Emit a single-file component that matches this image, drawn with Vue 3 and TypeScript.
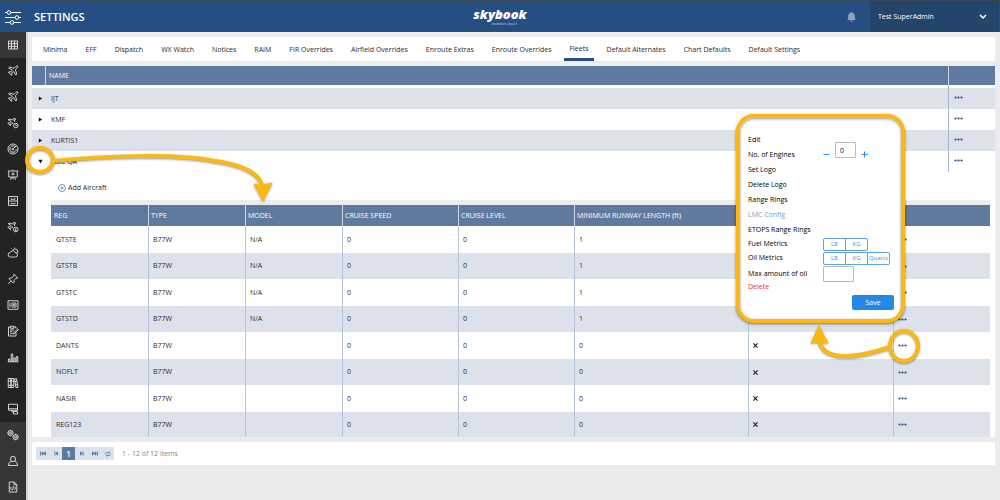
<script setup lang="ts">
import { ref } from 'vue'

interface SideIcon {
  name: string
  strokes: string
  fills?: string
}

const plane =
  'M21.5 2.5c-1-1-3-.4-4 .6L14 6.600l-9-2.600-1.800 1.800 7.300 4.700-3.500 3.500-3.300-.5-1.200 1.200 3.800 2.300 2.300 3.800 1.200-1.200-.5-3.300 3.500-3.500 4.700 7.300 1.800-1.800-2.600-9 3.500-3.500c1-1 1.600-3 .6-4z'
const smallPlane =
  'M16 3c-1-.8-2.500-.2-3.300.6L10.500 6 4 4 2.500 5.500 8 9l-3 3-2.500-.4-1 1 3 1.900 2 3 1-1L7 14l3-3 2 3.500M15 9l-.8-2L16.200 5c.6-.7.6-1.500-.2-2z'

const sideIcons: SideIcon[] = [
  { name: 'Grid', strokes: 'M3 4h18v16H3zM3 9.300h18M3 14.700h18M9 4v16M15 4v16' },
  { name: 'Flights', strokes: plane },
  { name: 'Aircraft', strokes: plane },
  { name: 'Flight times', strokes: smallPlane + 'M22 17a4.500 4.500 0 1 1-9 0a4.500 4.500 0 1 1 9 0M17.500 14.500v2.500h2' },
  {
    name: 'Radar',
    strokes: 'M22 12a10 10 0 1 1-20 0a10 10 0 1 1 20 0M17 8a6.500 6.500 0 1 0 1.500 4M12 12l7-7M7 12h2M12 17v-2',
    fills: 'M10 12a2 2 0 1 0 4 0a2 2 0 1 0-4 0'
  },
  { name: 'Briefing', strokes: 'M1.500 4h21M3.500 4v12h17V4M7 21.500l2-5.500M17 21.500l-2-5.500M12 1.500v2.500M12 7v6M8.500 10h7M12 16v5' },
  { name: 'Cabinet', strokes: 'M3 3h18v18H3zM3 12h18M8 6.500v2h8v-2M8 15.500v2h8v-2' },
  { name: 'Flight alerts', strokes: smallPlane + 'M22 17a4.500 4.500 0 1 1-9 0a4.500 4.500 0 1 1 9 0M17.500 14.500v5M16 18l1.500 1.500L19 18' },
  {
    name: 'Weather',
    strokes: 'M7 20a4.500 4.500 0 0 1-.5-9 5.500 5.500 0 0 1 10.500 1 4 4 0 0 1 0 8zM12 6a5 5 0 0 1 8 6M15 1v2M21 4l-1.500 1.500M23 10h-1.500M9 3l1 1.500'
  },
  { name: 'Pins', strokes: 'M14 2.500l7.500 7.500-2 1-1.500-.5-4 4 .3 4-1.800 1.500L4 11.500 5.500 9.700l4 .3 4-4-.5-1.500zM8 16l-5.500 5.500' },
  {
    name: 'Safe',
    strokes: 'M2 3.500h20v17H2zM6 7v10M10 8h8v8h-8z',
    fills: 'M12 12a2 2 0 1 0 4 0a2 2 0 1 0-4 0'
  },
  { name: 'Reports', strokes: 'M7 4H3v18h15v-7M14 4h4v3M7 2.500h7v4H7zM6 10h8M6 13.500h5M6 17.500h5M21.500 7.500l1.500 1.500-8 8-2.500.8.8-2.500z' },
  { name: 'Statistics', strokes: 'M1.500 21.500h21M3 21v-5h3v5M8.500 21V6h3v15M13.500 21v-7h3v7M18.500 21V11h3v10' },
  { name: 'Library', strokes: 'M2.500 3h5.500v18H2.500zM8 3h5.500v18H8zM15 4l4-.8L22 20.500l-4 .8zM2.500 8H13M2.500 16.500H13M16 9l4-.8M17 16l4-.8' },
  { name: 'Terminals', strokes: 'M3 2.500h18v12H3zM3 11.500h18M10 14.500v3.500h3M13 17h8v5h-8z' },
  {
    name: 'Settings',
    strokes:
      'M12 8a5 5 0 1 1-10 0a5 5 0 1 1 10 0M9 8a2 2 0 1 1-4 0a2 2 0 1 1 4 0M7 3V1.500M7 13v1.500M2 8H.5M3.500 4.500l-1-1M3.500 11.500l-1 1M10.500 4.500l1-1M22 16a5 5 0 1 1-10 0a5 5 0 1 1 10 0M19 16a2 2 0 1 1-4 0a2 2 0 1 1 4 0M17 11V9.500M17 21v1.500M22 16h1.500M20.500 12.500l1-1M20.500 19.500l1 1M13.500 19.500l-1 1'
  },
  { name: 'Users', strokes: 'M17 8a5 5.500 0 1 1-10 0a5 5.500 0 1 1 10 0M8.500 12.500C5 14 3 16 3 21h18c0-5-2-7-5.500-8.500' },
  { name: 'Scripts', strokes: 'M4.500 2h10l5 5v15h-15zM14 2v5.500h5.500M9 11.500L6.800 14.500 9 17.500M15 11.500l2.200 3-2.200 3M13 10.500l-2 8' }
]

const tabs = [
  'Minima', 'EFF', 'Dispatch', 'WX Watch', 'Notices', 'RAIM', 'FIR Overrides', 'Airfield Overrides',
  'Enroute Extras', 'Enroute Overrides', 'Fleets', 'Default Alternates', 'Chart Defaults', 'Default Settings'
]
const activeTab = ref('Fleets')

const fleets = ref([
  { name: 'IJT', open: false },
  { name: 'KMF', open: false },
  { name: 'KURTIS1', open: false },
  { name: 'LMC QA', open: true }
])

const columns = ['REG', 'TYPE', 'MODEL', 'CRUISE SPEED', 'CRUISE LEVEL', 'MINIMUM RUNWAY LENGTH (ft)', '', '']

const aircraft = [
  { reg: 'GTSTE', model: 'N/A', runway: 1 },
  { reg: 'GTSTB', model: 'N/A', runway: 1 },
  { reg: 'GTSTC', model: 'N/A', runway: 1 },
  { reg: 'GTSTD', model: 'N/A', runway: 1 },
  { reg: 'DANTS', model: '', runway: 0 },
  { reg: 'NOFLT', model: '', runway: 0 },
  { reg: 'NASIR', model: '', runway: 0 },
  { reg: 'REG123', model: '', runway: 0 }
]

const engines = ref(0)
const maxOil = ref('')
const fuelUnits = ['LB', 'KG']
const oilUnits = ['LB', 'KG', 'Quarts']
</script>

<template>
  <div class="app">
    <header class="topbar">
      <button class="menu-btn" aria-label="Menu">
        <svg viewBox="0 0 16 16" width="16" height="16">
          <path d="M0 3.500h2M6 3.500h10M0 8.500h10M14 8.500h2M0 13.500h5M9 13.500h7" />
          <circle cx="4" cy="3.500" r="1.800" />
          <circle cx="12" cy="8.500" r="1.800" />
          <circle cx="7" cy="13.500" r="1.800" />
        </svg>
      </button>
      <h1>SETTINGS</h1>
      <div class="logo">
        <span class="brand">skybook</span>
        <span class="tagline">aviation cloud</span>
      </div>
      <button class="bell" aria-label="Notifications">
        <svg viewBox="0 0 10 12" width="9" height="10">
          <path d="M5 0a1 1 0 0 1 1 1c2 .5 3 2 3 4v2.500L10 9.500H0l1-2V5c0-2 1-3.500 3-4a1 1 0 0 1 1-1zM3.500 10.200h3a1.500 1.500 0 0 1-3 0z" />
        </svg>
      </button>
      <button class="user">
        <span>Test SuperAdmin</span>
        <svg viewBox="0 0 8 6" width="8" height="6"><path d="M1 1l3 3 3-3" /></svg>
      </button>
    </header>

    <div class="body">
      <nav class="sidebar" aria-label="Main">
        <button v-for="icon in sideIcons" :key="icon.name" :aria-label="icon.name">
          <svg viewBox="0 0 24 24" width="12" height="12">
            <path :d="icon.strokes" />
            <path v-if="icon.fills" class="solid" :d="icon.fills" />
          </svg>
        </button>
      </nav>

      <main class="content">
        <nav class="tabs" aria-label="Settings sections">
          <a v-for="tab in tabs" :key="tab" href="#" :class="{ active: tab === activeTab }" @click.prevent="activeTab = tab">{{ tab }}</a>
        </nav>

        <section class="card">
          <table class="fleets">
            <colgroup><col class="c-toggle" /><col /><col class="c-more" /></colgroup>
            <thead>
              <tr><th></th><th>NAME</th><th></th></tr>
            </thead>
            <tbody>
              <tr class="spacer"><td></td><td></td><td></td></tr>
              <tr v-for="fleet in fleets" :key="fleet.name" class="fleet">
                <td>
                  <button class="toggle" :aria-label="'Toggle ' + fleet.name" :aria-expanded="fleet.open" @click="fleet.open = !fleet.open">
                    <svg viewBox="0 0 6 6" width="5" height="5"><path :d="fleet.open ? 'M.5 1h5L3 5.500z' : 'M1 .5v5l4-2.500z'" /></svg>
                  </button>
                </td>
                <td>{{ fleet.name }}</td>
                <td>
                  <button class="more" :aria-label="fleet.name + ' actions'">
                    <svg viewBox="0 0 9 3" width="9" height="3"><circle cx="1.500" cy="1.500" r="1.100" /><circle cx="4.500" cy="1.500" r="1.100" /><circle cx="7.500" cy="1.500" r="1.100" /></svg>
                  </button>
                </td>
              </tr>
            </tbody>
          </table>

          <div class="detail">
            <button class="add">
              <svg viewBox="0 0 10 10" width="8" height="8"><circle cx="5" cy="5" r="4.400" /><path d="M3 5h4M5 3v4" /></svg>
              Add Aircraft
            </button>
            <div class="strip"></div>
            <table class="aircraft">
              <colgroup>
                <col class="w-s" /><col class="w-s" /><col class="w-s" /><col class="w-m" /><col class="w-m" /><col class="w-xl" /><col class="w-l" /><col class="w-s" />
              </colgroup>
              <thead>
                <tr><th v-for="(column, i) in columns" :key="i">{{ column }}</th></tr>
              </thead>
              <tbody>
                <tr v-for="plane in aircraft" :key="plane.reg">
                  <td>{{ plane.reg }}</td>
                  <td>B77W</td>
                  <td>{{ plane.model }}</td>
                  <td>0</td>
                  <td>0</td>
                  <td>{{ plane.runway }}</td>
                  <td><svg class="cross" viewBox="0 0 6 6" width="5" height="5"><path d="M.5.5l5 5M5.500.5l-5 5" /></svg></td>
                  <td>
                    <button class="more" :aria-label="plane.reg + ' actions'">
                      <svg viewBox="0 0 9 3" width="9" height="3"><circle cx="1.500" cy="1.500" r="1.100" /><circle cx="4.500" cy="1.500" r="1.100" /><circle cx="7.500" cy="1.500" r="1.100" /></svg>
                    </button>
                  </td>
                </tr>
              </tbody>
            </table>
          </div>
        </section>

        <footer class="pager">
          <div class="pages">
            <button aria-label="First page"><svg viewBox="0 0 8 6" width="6" height="5"><path d="M0 0h1v6H0zM4.500 0v6L1 3zM8 0v6L4.500 3z" /></svg></button>
            <button aria-label="Previous page"><svg viewBox="0 0 8 6" width="6" height="5"><path d="M2 0h1v6H2zM6.500 0v6L3 3z" /></svg></button>
            <button class="current">1</button>
            <button aria-label="Next page"><svg viewBox="0 0 8 6" width="6" height="5"><path d="M5 0h1v6H5zM1.500 0v6L5 3z" /></svg></button>
            <button aria-label="Last page"><svg viewBox="0 0 8 6" width="6" height="5"><path d="M7 0h1v6H7zM3.500 0v6L7 3zM0 0v6l3.500-3z" /></svg></button>
            <button aria-label="Refresh"><svg class="line" viewBox="0 0 8 8" width="6" height="6"><path d="M1 4V3q0-1 1-1h4M5 .5L6.800 2 5 3.500M7 4v1q0 1-1 1H2M3 4.500L1.200 6 3 7.500" /></svg></button>
          </div>
          <span>1 - 12 of 12 items</span>
        </footer>
      </main>
    </div>

    <div class="popup" role="dialog" aria-label="Aircraft actions">
      <button class="item">Edit</button>
      <div class="item">
        <label for="engines">No. of Engines</label>
        <div class="stepper">
          <button aria-label="Fewer engines" @click="engines--"><svg viewBox="0 0 7 7" width="7" height="7"><path d="M.5 3.500h6" /></svg></button>
          <input id="engines" v-model="engines" type="text" />
          <button aria-label="More engines" @click="engines++"><svg viewBox="0 0 7 7" width="7" height="7"><path d="M.5 3.500h6M3.500.5v6" /></svg></button>
        </div>
      </div>
      <button class="item">Set Logo</button>
      <button class="item">Delete Logo</button>
      <button class="item">Range Rings</button>
      <button class="item muted">LMC Config</button>
      <button class="item">ETOPS Range Rings</button>
      <div class="item metric">
        <span>Fuel Metrics</span>
        <div class="units"><button v-for="unit in fuelUnits" :key="unit">{{ unit }}</button></div>
      </div>
      <div class="item metric">
        <span>Oil Metrics</span>
        <div class="units"><button v-for="unit in oilUnits" :key="unit">{{ unit }}</button></div>
      </div>
      <div class="item oil">
        <label for="max-oil">Max amount of oil</label>
        <input id="max-oil" v-model="maxOil" type="text" />
      </div>
      <button class="item danger">Delete</button>
      <button class="save">Save</button>
    </div>

    <svg class="marks marks-left" viewBox="0 0 300 220" width="300" height="220" aria-hidden="true">
      <ellipse cx="40" cy="160" rx="13" ry="12" />
      <path d="M53 161C100 156 175 153 215 161Q257 167 262 185" />
      <path class="head" d="M254 184q9 2 18-1l-9 18z" />
    </svg>
    <svg class="marks marks-right" viewBox="0 0 200 400" width="200" height="400" aria-hidden="true">
      <ellipse cx="104" cy="346" rx="14" ry="15" />
      <path d="M90 347C60 357 22 364 19 339" />
      <path class="head" d="M19 326l-8 17q8-3 17 0z" />
    </svg>
  </div>
</template>

<style>
body {
  margin: 0;
  background: #ecebed;
}
</style>

<style scoped>
.app {
  position: relative;
  min-height: 100vh;
  display: flex;
  flex-direction: column;
  overflow: hidden;
  background: #ecebed;
  color: #2b2b2b;
  font: 7px/10px "Open Sans", "Noto Sans", sans-serif;
}

.app * {
  box-sizing: border-box;
}

button {
  margin: 0;
  padding: 0;
  border: 0;
  background: none;
  color: inherit;
  font: inherit;
  cursor: pointer;
}

svg {
  display: block;
}

.topbar {
  height: 32px;
  display: grid;
  grid-template-columns: 34px 100px 1fr 38px 130px;
  align-items: center;
  border-top: 1px solid #3b4754;
  background: #254f82;
  color: #fff;
}

.menu-btn {
  padding-left: 5px;
}

.menu-btn svg {
  fill: none;
  stroke: #fff;
  stroke-width: 1;
}

h1 {
  margin: 0;
  font-size: 11px;
  line-height: 16px;
  font-weight: 600;
}

.logo {
  display: flex;
  flex-direction: column;
  align-items: center;
  padding-left: 34px;
  justify-self: center;
  font-style: italic;
}

.brand {
  font-size: 13px;
  line-height: 15px;
  font-weight: 800;
}

.tagline {
  padding-left: 8px;
  font-size: 4px;
  line-height: 4px;
  color: #b9c8dc;
}

.bell svg {
  margin: 0 auto;
  fill: #8fa3bd;
}

.user {
  align-self: stretch;
  display: flex;
  align-items: center;
  justify-content: space-between;
  padding: 0 12px 0 8px;
  border-right: 1px solid #254f82;
  background: #24456b;
}

.user svg {
  fill: none;
  stroke: #fff;
  stroke-width: 1.500;
}

.body {
  flex: 1;
  display: flex;
}

.sidebar {
  width: 28px;
  display: flex;
  flex-direction: column;
  border-right: 2px solid #d3d3d4;
  background: #232323;
}

.sidebar button {
  height: 26px;
  display: grid;
  place-items: center;
}

.sidebar button:first-child,
.sidebar button:nth-last-child(-n + 3) {
  background: #363636;
}

.sidebar svg {
  fill: none;
  stroke: #e6e6e6;
  stroke-width: 1.800;
  stroke-linejoin: round;
}

.sidebar .solid {
  fill: #e6e6e6;
  stroke: none;
}

.content {
  flex: 1;
  min-width: 0;
  padding: 5px 5px 0 4px;
}

.tabs {
  height: 24px;
  display: flex;
  gap: 8px;
  padding-left: 6px;
  background: #fff;
}

.tabs a {
  padding: 0 5px;
  line-height: 25px;
  color: inherit;
  text-decoration: none;
  white-space: nowrap;
}

.tabs .active {
  border-bottom: 3px solid #254f82;
  line-height: 23px;
}

.card {
  margin-top: 5px;
  background: #fff;
}

table {
  width: 100%;
  border-collapse: separate;
  border-spacing: 0;
  table-layout: fixed;
}

th,
td {
  padding: 0;
  text-align: left;
  font-weight: 400;
  white-space: nowrap;
}

th {
  background: #5f7a9e;
  color: #fff;
}

.fleets th {
  height: 19px;
}

.fleets th + th {
  border-left: 1px solid #ccd6e3;
  padding-left: 3px;
}

.c-toggle {
  width: 13px;
}

.c-more {
  width: 47px;
}

.spacer td {
  height: 3px;
}

.fleet td {
  height: 21px;
}

.fleet:nth-child(even) td {
  background: #dde1eb;
}

.fleet td:nth-child(2) {
  padding-left: 6px;
}

.fleets td:last-child {
  border-left: 1px solid #a9b6c9;
  padding-left: 5px;
}

.toggle {
  display: block;
  margin-left: 6px;
}

.toggle svg {
  fill: #111;
}

.more {
  display: block;
}

.fleets .more {
  padding-bottom: 2px;
}

.more svg {
  fill: #254f82;
}

.detail {
  padding: 0 5px 0 19px;
}

.add {
  display: flex;
  align-items: center;
  gap: 2px;
  height: 28px;
  padding: 3px 0 0 7px;
}

.add svg {
  fill: none;
  stroke: #5078b4;
  stroke-width: 1;
}

.strip {
  height: 5px;
  background: #ecebed;
}

.w-s {
  width: 97px;
}

.w-m {
  width: 116px;
}

.w-l {
  width: 145px;
}

.w-xl {
  width: 174px;
}

.aircraft th {
  height: 21px;
  padding-left: 3px;
}

.aircraft th + th {
  border-left: 1px solid #ccd6e3;
  padding-left: 2px;
}

.aircraft td {
  height: 27px;
  padding-left: 5px;
}

.aircraft td + td {
  border-left: 1px solid #b6c4da;
  padding-left: 4px;
}

.aircraft tr:nth-child(even) td {
  height: 26px;
  background: #dde1eb;
}

.aircraft tr:last-child td {
  height: 25px;
}

.cross {
  fill: none;
  stroke: #222;
  stroke-width: 1.400;
}

.pager {
  height: 23px;
  margin-top: 5px;
  display: flex;
  align-items: center;
  gap: 8px;
  padding-left: 4px;
  background: #fff;
  color: #858585;
}

.pages {
  display: flex;
  background: #dde1eb;
}

.pages button {
  width: 13px;
  height: 13px;
  display: grid;
  place-items: center;
}

.pages svg {
  fill: #5076a8;
}

.pages .line {
  fill: none;
  stroke: #5076a8;
}

.pages .current {
  background: #5f7a9e;
  color: #fff;
  font-size: 8px;
  font-weight: 600;
}

.popup {
  position: absolute;
  z-index: 1;
  top: 114px;
  right: 95px;
  width: 169px;
  display: flex;
  flex-direction: column;
  padding: 14px 7px 9px 8px;
  border: 4px solid #fbb813;
  border-radius: 18px;
  background: #fff;
  box-shadow: 0 1px 3px rgba(0, 0, 0, 0.5), inset 0 1px 3px rgba(0, 0, 0, 0.4);
  color: #000;
}

.item {
  height: 15px;
  display: flex;
  align-items: center;
  text-align: left;
}

.item > label,
.item > span {
  width: 75px;
}

.metric {
  height: 14px;
}

.muted {
  color: #8398bf;
}

.danger {
  height: 10px;
  color: #e5393f;
}

.stepper {
  align-self: flex-end;
  display: flex;
  align-items: flex-end;
  gap: 5px;
  margin-bottom: 4px;
}

.stepper svg {
  fill: none;
  stroke: #2b8de8;
}

input {
  height: 16px;
  padding: 0 4px;
  border: 1px solid #bbb;
  border-radius: 1px;
  background: #fff;
  color: #111;
  font: inherit;
}

.stepper input {
  width: 21px;
}

.oil {
  height: 16px;
  margin-top: 1px;
}

.oil input {
  width: 31px;
}

.units {
  display: flex;
  border: 1px solid #5ba3e6;
  border-radius: 2px;
}

.units button {
  width: 21px;
  height: 11px;
  color: #3c92e4;
  font-size: 6px;
  line-height: 10px;
}

.units button + button {
  width: 22px;
  border-left: 1px solid #5ba3e6;
}

.save {
  align-self: flex-end;
  width: 42px;
  height: 15px;
  margin-top: 3px;
  border-radius: 2px;
  background: #2488e6;
  color: #fff;
}

.marks {
  position: absolute;
  z-index: 2;
  top: 0;
  fill: none;
  stroke: #fbb813;
  stroke-width: 4;
  pointer-events: none;
  filter: drop-shadow(0 1px 1px rgba(0, 0, 0, 0.4));
}

.marks-left {
  left: 0;
}

.marks-right {
  right: 0;
}

.head {
  fill: #fbb813;
  stroke-width: 1;
}
</style>
